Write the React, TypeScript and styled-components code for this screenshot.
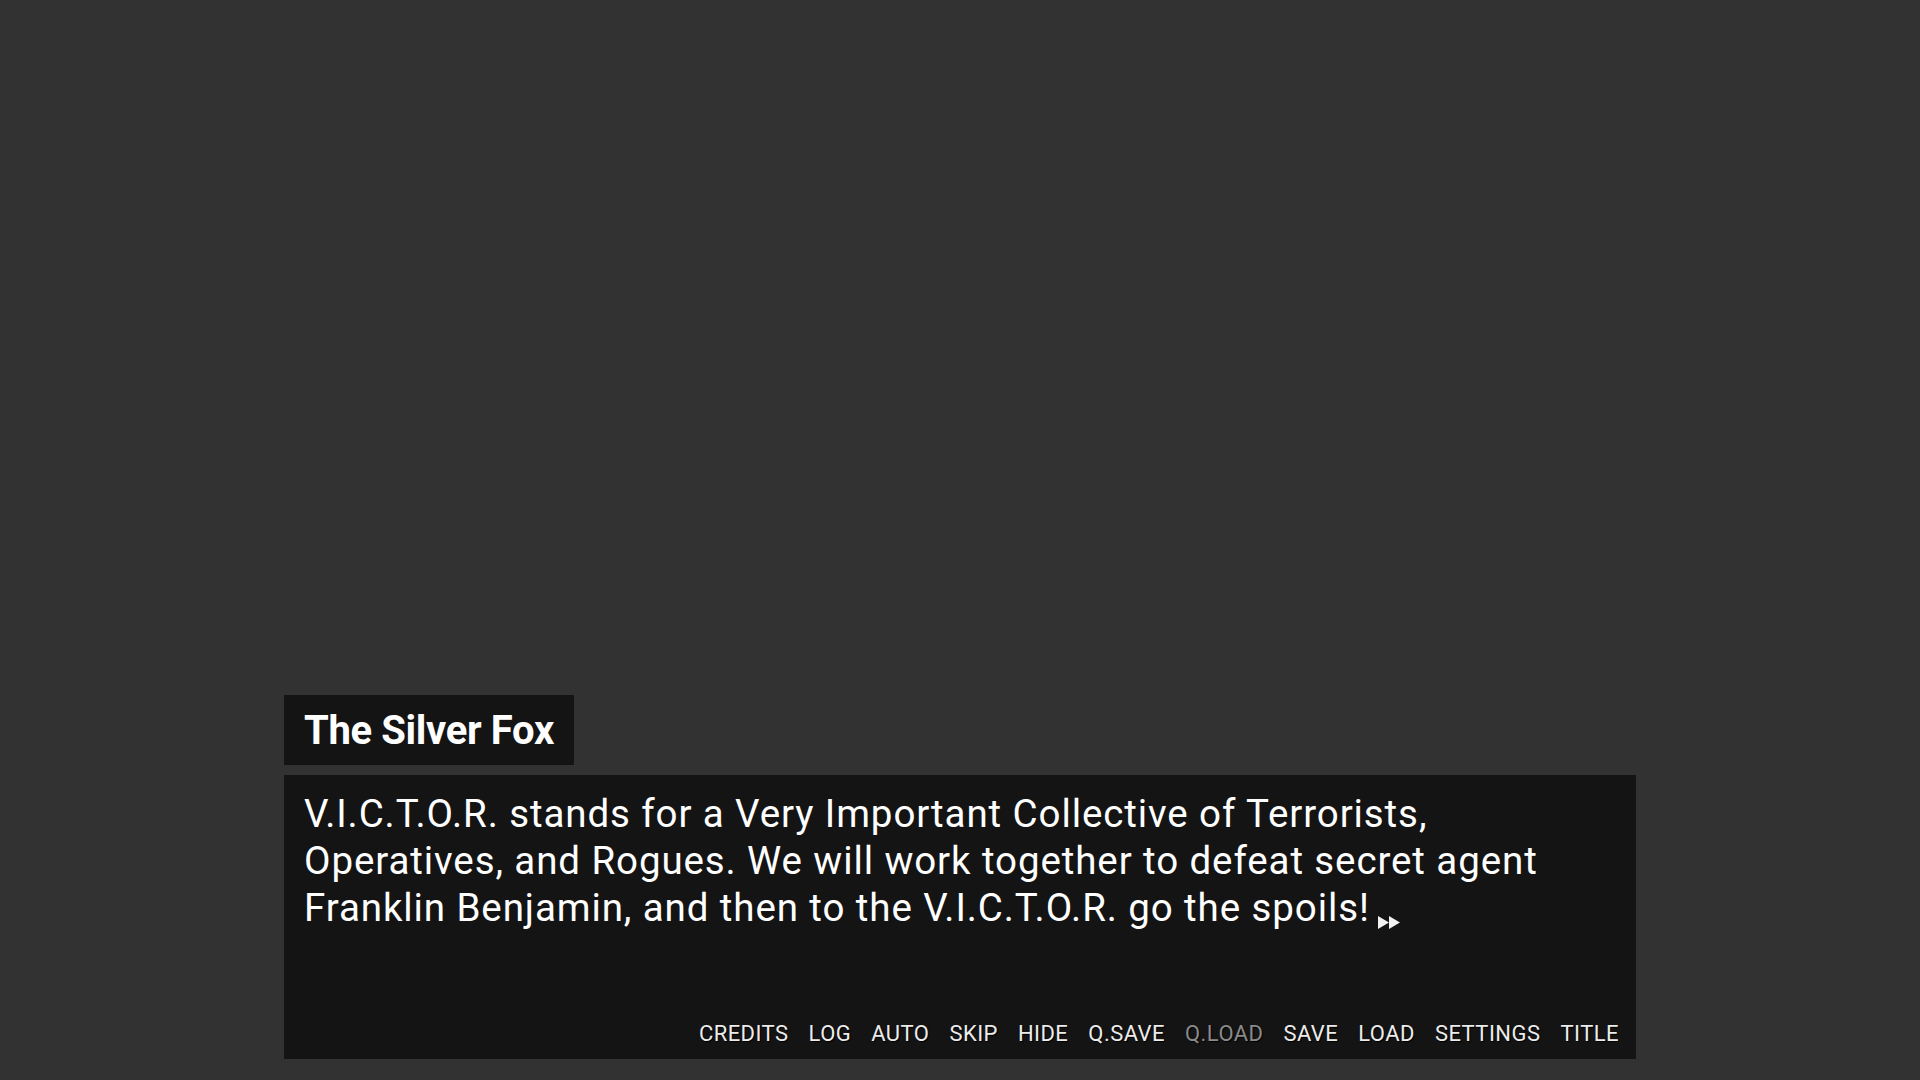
import React from "react";
import styled, { createGlobalStyle } from "styled-components";

const GlobalStyle = createGlobalStyle`
    html, body {
        margin: 0;
        padding: 0;
        background-color: #323232;
    }
    body {
        font-family: Roboto, "Liberation Sans", sans-serif;
    }
`;

const Screen = styled.div`
    width: 1920px;
    height: 1080px;
    display: flex;
    flex-direction: column;
    justify-content: flex-end;
    align-items: center;
    padding-bottom: 21px;
    box-sizing: border-box;
    background-color: #323232;
`;

const DialogArea = styled.div`
    width: 1352px;
    display: flex;
    flex-direction: column;
    align-items: flex-start;
    gap: 10px;
`;

const NameBox = styled.div`
    height: 70px;
    display: flex;
    align-items: center;
    padding: 0 20px;
    box-sizing: border-box;
    background-color: #141414;
    color: #ffffff;
    font-size: 40px;
    font-weight: 700;
    letter-spacing: -0.35px;
`;

const TextBox = styled.div`
    width: 100%;
    height: 284px;
    display: flex;
    flex-direction: column;
    padding: 15px 17px 12px 20px;
    box-sizing: border-box;
    background-color: #141414;
`;

const Say = styled.p`
    margin: 0;
    color: #ffffff;
    font-size: 38.5px;
    line-height: 47px;
    letter-spacing: 0.9px;
`;

const ContinueIcon = styled.svg`
    width: 23px;
    height: 13px;
    margin-left: 8px;
    vertical-align: -8px;
`;

const QuickMenu = styled.nav`
    margin-top: auto;
    display: flex;
    justify-content: flex-end;
    gap: 20px;
`;

interface MenuItemProps {
    disabled?: boolean;
}

const MenuItem = styled.span<MenuItemProps>`
    font-size: 22px;
    line-height: 26px;
    letter-spacing: 0.45px;
    color: ${(props) => (props.disabled ? "#8a8a8a" : "#ececec")};
    text-shadow: 1px 1px 1px #000000;
    cursor: ${(props) => (props.disabled ? "default" : "pointer")};
`;

const menuItems = [
    { label: "CREDITS" },
    { label: "LOG" },
    { label: "AUTO" },
    { label: "SKIP" },
    { label: "HIDE" },
    { label: "Q.SAVE" },
    { label: "Q.LOAD", disabled: true },
    { label: "SAVE" },
    { label: "LOAD" },
    { label: "SETTINGS" },
    { label: "TITLE" },
];

const App: React.FC = () => {
    return (
        <>
            <GlobalStyle />
            <Screen>
                <DialogArea>
                    <NameBox>The Silver Fox</NameBox>
                    <TextBox>
                        <Say>
                            V.I.C.T.O.R. stands for a Very Important Collective of Terrorists, Operatives, and Rogues. We
                            will work together to defeat secret agent Franklin Benjamin, and then to the V.I.C.T.O.R. go
                            the spoils!
                            <ContinueIcon viewBox="0 0 23 13">
                                <polygon points="0,0 11,6.5 0,13" fill="#f2f2f2" />
                                <polygon points="11,0 22,6.5 11,13" fill="#f2f2f2" />
                            </ContinueIcon>
                        </Say>
                        <QuickMenu>
                            {menuItems.map((item) => (
                                <MenuItem key={item.label} disabled={item.disabled}>
                                    {item.label}
                                </MenuItem>
                            ))}
                        </QuickMenu>
                    </TextBox>
                </DialogArea>
            </Screen>
        </>
    );
};

export default App;
